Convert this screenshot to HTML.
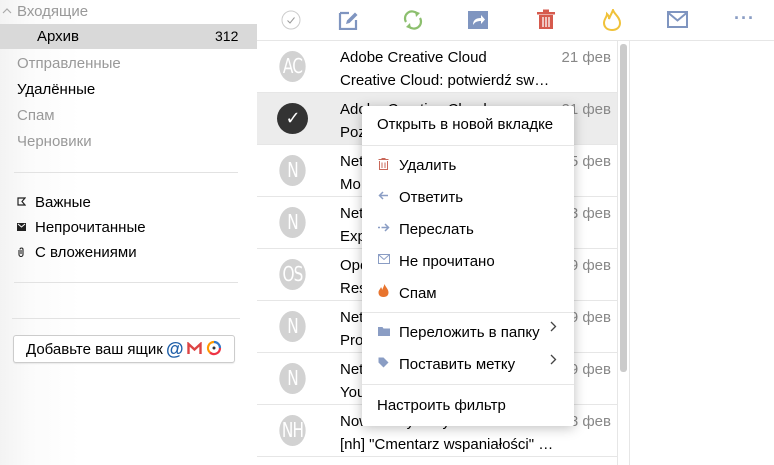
<!DOCTYPE html>
<html><head><meta charset="utf-8"><style>
*{margin:0;padding:0;box-sizing:border-box}
body{width:774px;height:465px;overflow:hidden;background:#fff;font-family:"Liberation Sans",sans-serif;font-size:15px;color:#000;position:relative}
.abs{position:absolute}
.side{left:0;top:0;width:257px;height:465px;background:linear-gradient(90deg,#f3f3f3,#fbfbfb 30px,#fff 80px)}
.fi{position:absolute;left:17px;font-size:15px}
.gray{color:#999}
.hr{position:absolute;height:1px;background:#e2e2e2}
.row{position:absolute;left:257px;width:360px;height:52px;border-bottom:1px solid #e6e6e6}
.av{position:absolute;left:20px;top:10px;width:31px;height:31px;border-radius:50%;background:#d2d2d2;color:#fff;font-family:"DejaVu Sans Condensed","Liberation Sans Narrow",sans-serif;font-size:20px;text-align:center;line-height:31px;letter-spacing:-1px;transform:scaleX(0.85)}
.from{position:absolute;left:83px;top:8px;white-space:nowrap}
.subj{position:absolute;left:83px;top:31px;white-space:nowrap}
.date{position:absolute;right:6px;top:8px;color:#888;font-size:15px}
.menu{left:362px;top:106px;width:212px;height:320px;background:#fff;box-shadow:0 2px 12px rgba(0,0,0,.25);border-radius:2px}
.mi{position:absolute;left:37px;font-size:15px;white-space:nowrap}
.msep{position:absolute;left:0;width:212px;height:1px;background:#e6e6e6}
.ic{position:absolute}
</style></head><body>
<div class="abs side"></div>
<div class="abs" style="left:0;top:24px;width:257px;height:25px;background:#d9d9d9"></div>
<svg class="abs" style="left:2px;top:7px" width="10" height="8"><path d="M1 6 L5 2 L9 6" stroke="#aaa" fill="none" stroke-width="1.2"/></svg>
<div class="fi gray" style="top:3px">Входящие</div>
<div class="fi" style="left:37px;top:28px">Архив</div>
<div class="fi" style="left:215px;top:28px;font-size:14px">312</div>
<div class="fi gray" style="top:55px">Отправленные</div>
<div class="fi" style="top:81px">Удалённые</div>
<div class="fi gray" style="top:107px">Спам</div>
<div class="fi gray" style="top:133px">Черновики</div>
<div class="hr" style="left:14px;top:172px;width:224px"></div>
<svg class="abs" style="left:17px;top:197px" width="9" height="9"><path d="M1 1H8L5 4.5L8 8H1Z" fill="none" stroke="#222" stroke-width="1.2"/></svg>
<div class="fi" style="left:35px;top:194px">Важные</div>
<svg class="abs" style="left:17px;top:223px" width="9" height="8"><rect x="0" y="0" width="9" height="8" fill="#222"/><path d="M1 1L4.5 4L8 1" stroke="#fff" fill="none"/></svg>
<div class="fi" style="left:35px;top:219px">Непрочитанные</div>
<svg class="abs" style="left:17px;top:247px" width="8" height="10"><path d="M4 3V7M2 3V7.5A2 2 0 0 0 6 7.5V2.5A1.5 1.5 0 0 0 3 2.5" stroke="#222" fill="none" stroke-width="1.1"/></svg>
<div class="fi" style="left:35px;top:244px">С вложениями</div>
<div class="hr" style="left:14px;top:282px;width:224px"></div>
<div class="hr" style="left:12px;top:318px;width:228px"></div>
<div class="abs" style="left:13px;top:335px;width:222px;height:28px;border:1px solid #ccc;border-radius:3px;background:#fff;box-shadow:0 1px 1px rgba(0,0,0,.08)"></div>
<div class="fi" style="left:26px;top:341px">Добавьте ваш ящик</div>
<div class="abs" style="left:166px;top:339px;font-size:18px;font-weight:bold;color:#1f5fa8">@</div>
<svg class="abs" style="left:187px;top:342px" width="15" height="13"><path d="M1.5 12V2L7.5 7.5L13.5 2V12" stroke="#d44" stroke-width="2.4" fill="none"/></svg>
<svg class="abs" style="left:206px;top:340px" width="16" height="16"><path d="M8 2A6 6 0 0 1 14 8" stroke="#3578c7" stroke-width="2.2" fill="none"/><path d="M14 8A6 6 0 0 1 4 12.5" stroke="#e34" stroke-width="2.2" fill="none"/><path d="M4 12.5A6 6 0 0 1 8 2" stroke="#f90" stroke-width="2.2" fill="none"/><circle cx="8" cy="8" r="1.5" fill="#333"/></svg>

<!-- toolbar -->
<div class="hr" style="left:257px;top:40px;width:517px;background:#e6e6e6"></div>
<svg class="abs" style="left:281px;top:10px" width="20" height="20"><circle cx="10" cy="10" r="9" fill="none" stroke="#ccc"/><path d="M6.5 10.5L9 13L13.5 7.5" stroke="#999" fill="none"/></svg>
<svg class="abs" style="left:338px;top:10px" width="22" height="20"><path d="M2 3H11M2 3V19H18V10" stroke="#7f95c0" stroke-width="2.2" fill="none"/><path d="M8 14L9 10.5L17 2.5L19.5 5L11.5 13Z" fill="#7f95c0"/></svg>
<svg class="abs" style="left:402px;top:9px" width="22" height="22"><path d="M4 13A7 7 0 0 1 15 4.5M18 9A7 7 0 0 1 7 17.5" stroke="#8cbf6e" stroke-width="2.2" fill="none"/><path d="M13 2L18 4L14 8ZM9 20L4 18L8 14Z" fill="#8cbf6e"/></svg>
<svg class="abs" style="left:467px;top:10px" width="22" height="20"><rect x="1" y="1" width="20" height="18" fill="#7f95c0"/><path d="M6 15C6 10 9 8 14 8V5L18 9.5L14 14V11C10 11 8 12 6 15Z" fill="#fff"/></svg>
<svg class="abs" style="left:536px;top:9px" width="20" height="21"><rect x="1" y="3" width="18" height="2.5" fill="#d65a4d"/><rect x="7" y="0.5" width="6" height="3" fill="#d65a4d"/><path d="M3 6H17V20H3ZM6.5 8V18M10 8V18M13.5 8V18" fill="#d65a4d"/><path d="M7 8V18M10 8V18M13 8V18" stroke="#fff" stroke-width="1.3"/></svg>
<svg class="abs" style="left:601px;top:9px" width="22" height="22"><path d="M11 21C5 21 3 17 3 14C3 10 6 8 6 5C8 7 8 8 8 10C9 7 11 4 12 1C13 5 19 8 19 14C19 18 16 21 11 21Z" fill="none" stroke="#f0c23a" stroke-width="2"/></svg>
<svg class="abs" style="left:667px;top:11px" width="21" height="17"><rect x="1" y="1" width="19" height="15" fill="none" stroke="#7f95c0" stroke-width="2"/><path d="M1.5 2L10.5 9.5L19.5 2" stroke="#7f95c0" stroke-width="2" fill="none"/></svg>
<div class="abs" style="left:734px;top:8px;color:#8a9dc4;font-size:18px;letter-spacing:1px;font-weight:bold">···</div>

<!-- list -->
<div class="abs" style="left:617px;top:41px;width:1px;height:424px;background:#e6e6e6"></div>
<div class="abs" style="left:620px;top:44px;width:7px;height:328px;background:#cbcbcb;border-radius:3px"></div>
<div class="abs" style="left:629px;top:41px;width:1px;height:424px;background:#e6e6e6"></div>

<div class="row" style="top:41px"><div class="av">AC</div><div class="from">Adobe Creative Cloud</div><div class="date">21 фев</div><div class="subj">Creative Cloud: potwierdź sw…</div></div>
<div class="row" style="top:93px;background:#ececec"><div class="av" style="background:#333;font-family:'DejaVu Sans',sans-serif;font-size:18px;transform:none">✓</div><div class="from">Adobe Creative Cloud</div><div class="date">21 фев</div><div class="subj">Pozn</div></div>
<div class="row" style="top:145px"><div class="av">N</div><div class="from">Netflix</div><div class="date">25 фев</div><div class="subj">Mo</div></div>
<div class="row" style="top:197px"><div class="av">N</div><div class="from">Netflix</div><div class="date">13 фев</div><div class="subj">Exp</div></div>
<div class="row" style="top:249px"><div class="av">OS</div><div class="from">Opera</div><div class="date">19 фев</div><div class="subj">Res</div></div>
<div class="row" style="top:301px"><div class="av">N</div><div class="from">Netflix</div><div class="date">19 фев</div><div class="subj">Pro</div></div>
<div class="row" style="top:353px"><div class="av">N</div><div class="from">Netflix</div><div class="date">19 фев</div><div class="subj">You</div></div>
<div class="row" style="top:405px"><div class="av">NH</div><div class="from">Nowe Horyzonty newsletter</div><div class="date">8 фев</div><div class="subj">[nh] "Cmentarz wspaniałości" …</div></div>

<!-- menu -->
<div class="abs menu">
<div class="mi" style="left:15px;top:10px">Открыть в новой вкладке</div>
<div class="msep" style="top:39px"></div>
<svg class="ic" style="left:16px;top:52px" width="11" height="12"><path d="M0.5 1.5H10.5M3.5 0.5H7.5M1.5 3V11.5H9.5V3M4 4.5V10M7 4.5V10" stroke="#c9685a" fill="none"/></svg>
<div class="mi" style="top:51px">Удалить</div>
<svg class="ic" style="left:16px;top:85px" width="11" height="9"><path d="M10 4.5H2M5 1L1.5 4.5L5 8" stroke="#8a9dc4" stroke-width="1.5" fill="none"/></svg>
<div class="mi" style="top:83px">Ответить</div>
<svg class="ic" style="left:16px;top:117px" width="12" height="9"><path d="M0 4.5H2M3.5 4.5H10M7 1L10.5 4.5L7 8" stroke="#8a9dc4" stroke-width="1.5" fill="none"/></svg>
<div class="mi" style="top:115px">Переслать</div>
<svg class="ic" style="left:16px;top:148px" width="12" height="10"><rect x="0.5" y="0.5" width="11" height="9" fill="none" stroke="#8a9dc4"/><path d="M1 1L6 5.5L11 1" stroke="#8a9dc4" fill="none"/></svg>
<div class="mi" style="top:147px">Не прочитано</div>
<svg class="ic" style="left:16px;top:178px" width="11" height="13"><path d="M5.5 13C2 13 0.5 11 0.5 8.5C0.5 6 2.5 5 3 3C4 4.5 4 5 4 6C5 4 6 2 6.5 0C7.5 3 10.5 5 10.5 8.5C10.5 11 9 13 5.5 13Z" fill="#e8742e"/></svg>
<div class="mi" style="top:179px">Спам</div>
<div class="msep" style="top:206px"></div>
<svg class="ic" style="left:16px;top:220px" width="12" height="10"><path d="M0 1H4.5L5.5 2.5H12V10H0Z" fill="#8a9dc4"/></svg>
<div class="mi" style="top:218px">Переложить в папку</div>
<svg class="ic" style="left:188px;top:215px" width="7" height="11"><path d="M1 1L5.5 5.5L1 10" stroke="#444" stroke-width="1.3" fill="none"/></svg>
<svg class="ic" style="left:16px;top:251px" width="11" height="11"><path d="M0.5 0.5H5.5L10.5 5.5L5.5 10.5L0.5 5.5Z" fill="#8a9dc4"/></svg>
<div class="mi" style="top:250px">Поставить метку</div>
<svg class="ic" style="left:188px;top:248px" width="7" height="11"><path d="M1 1L5.5 5.5L1 10" stroke="#444" stroke-width="1.3" fill="none"/></svg>
<div class="msep" style="top:278px"></div>
<div class="mi" style="left:15px;top:291px">Настроить фильтр</div>
</div>
</body></html>
